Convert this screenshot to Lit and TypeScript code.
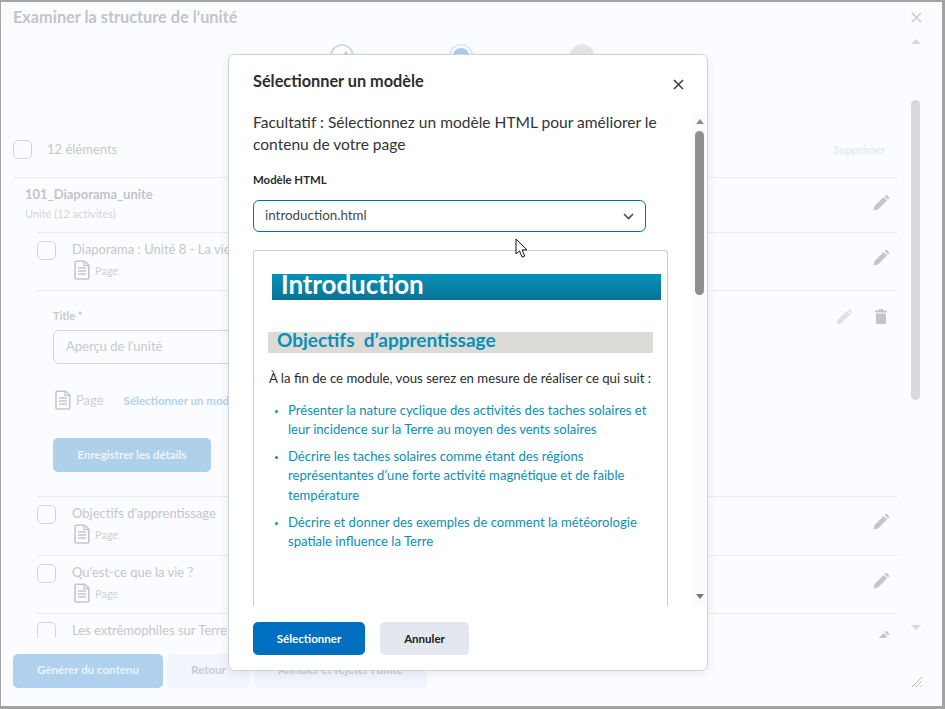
import { LitElement, html, css, svg } from "lit";
import { customElement } from "lit/decorators.js";

const pageIcon = svg`<svg class="pg" viewBox="0 0 16 20" width="16" height="20"><path d="M2 1.2h8.5L14.8 5v13a1 1 0 0 1-1 1H2a1 1 0 0 1-1-1V2.2a1 1 0 0 1 1-1z" fill="none" stroke="#c5c6c9" stroke-width="1.6"/><path d="M10 1.5V5.5h4.5M4 8h8M4 11h8M4 14h8" fill="none" stroke="#c5c6c9" stroke-width="1.3"/></svg>`;
const pencil = (c = "#c4c5c8") => svg`<svg viewBox="0 0 16 16" width="16" height="16"><path d="M0.4 15.6l1.2-4.6L10.7 2l3.4 3.4-9.1 9.1zM11.6 1.1l1-.9c.4-.3 1-.3 1.3 0l2 2c.3.4.3.9 0 1.3l-1 1z" fill="${c}"/></svg>`;

@customElement("app-root")
export class AppRoot extends LitElement {
  static styles = css`
    :host { display: block; width: 945px; height: 709px; overflow: hidden; position: relative; font-family: Lato, "Open Sans", sans-serif; background: #fff; }
    * { box-sizing: border-box; }
    .frame { width: 945px; height: 709px; background: #fbfcff; border: solid #a3a3a3; border-width: 2px 3px 3px 1px; display: flex; flex-direction: column; overflow: hidden; }
    .head { height: 30px; flex: none; padding: 5px 12px 0; display: flex; justify-content: space-between; }
    .head h1 { margin: 0; font-size: 16.3px; line-height: 19px; font-weight: 700; color: #c3c4c7; }
    .x { margin: 5px 8px 0 0; }
    .body { flex: none; height: 606px; display: flex; overflow: hidden; }
    .col { flex: 1; min-width: 0; overflow: hidden; }
    .steps { display: flex; height: 96px; padding: 12px 0 0 329px; gap: 95px; }
    .step { width: 24px; height: 24px; border-radius: 50%; flex: none; }
    .s1 { border: 2px solid #cfe3d3; background: #fff; }
    .s2 { background: #aecdea; border: 4px solid #fbfcff; outline: 1px solid #c5dcf0; outline-offset: -1px; }
    .s3 { background: #e4e6ea; margin-left: 2px; }
    .list { padding: 0 11px 0 12px; }
    .top { display: flex; align-items: center; height: 49px; padding-bottom: 6px; }
    .cb { width: 19px; height: 19px; border: 1px solid #d3d5da; border-radius: 5px; background: #fbfcff; flex: none; }
    .count { margin: -2px 0 0 15px; font-size: 13px; color: #c8c9cc; flex: 1; }
    .del { font-size: 11.2px; font-weight: 700; color: #e0ecf8; margin-right: 13px; }
    .unit { border-top: 1px solid #eaecf1; height: 55px; padding: 0 9px 0 12px; display: flex; justify-content: space-between; align-items: center; }
    .unit b { display: block; font-size: 13px; line-height: 18px; color: #c3c4c7; }
    .unit small { display: block; font-size: 11px; line-height: 22px; color: #d3d4d7; }
    .unit > svg { margin-top: -5px; }
    .subs { margin-left: 24px; }
    .row { border-top: 1px solid #eaecf1; height: 58px; display: flex; padding: 8px 9px 0 0; justify-content: space-between; }
    .row.tall { height: 59px; }
    .row .l { display: flex; gap: 16px; }
    .row .t { font-size: 13px; line-height: 18px; color: #c6c7ca; margin-top: -1px; }
    .meta { display: flex; align-items: center; gap: 5px; font-size: 11px; color: #d0d1d4; margin: 2px 0 0 2px; height: 20px; }
    .row > svg { margin-top: 9px; }
    .edit { border-top: 1px solid #eaecf1; height: 206px; padding: 18px 0 0 16px; display: flex; }
    .form { flex: 1; }
    .lbl { font-size: 11px; font-weight: 700; line-height: 14px; color: #c8c9cc; }
    .inp { margin-top: 7px; width: 420px; height: 34px; border: 1px solid #d5d7dc; border-radius: 6px; padding: 0 12px; font-size: 13px; line-height: 30px; color: #c8c9cc; }
    .pgrow { display: flex; align-items: center; gap: 5px; margin: 26px 0 0 2px; height: 20px; font-size: 13px; color: #cfd0d3; }
    .pgrow a { margin-left: 15px; font-size: 11.5px; font-weight: 700; color: #b3d3ee; }
    .save { margin-top: 28px; width: 158px; height: 34px; padding-bottom: 2px; border-radius: 5px; background: #aed0eb; color: #edf4fb; font-size: 11.5px; font-weight: 700; display: flex; align-items: center; justify-content: center; }
    .tools { display: flex; gap: 23px; padding-right: 11px; }
    .sb { width: 13px; flex: none; margin-right: 20px; display: flex; flex-direction: column; align-items: center; }
    .up { width: 0; height: 0; border: 5.5px solid transparent; border-top: 0; border-bottom: 5px solid #d6d8dc; margin-top: 7px; }
    .thumb { width: 9px; height: 300px; margin-top: 56px; background: #d8d9dd; border-radius: 5px; }
    .dn { width: 0; height: 0; border: 5.5px solid transparent; border-bottom: 0; border-top: 5px solid #d6d8dc; margin-top: auto; margin-bottom: 8px; }
    .foot { flex: none; height: 68px; display: flex; gap: 4px; padding: 16px 12px 0; position: relative; }
    .fb { height: 34px; padding-bottom: 3px; border-radius: 5px; display: flex; align-items: center; justify-content: center; font-size: 11.5px; font-weight: 700; background: #f2f5fb; color: #cbccd0; }
    .fb.p { background: #afd1ed; color: #eaf3fb; width: 150px; }
    .fb.r { width: 83px; }
    .fb.c { width: 173px; }
    .grip { position: absolute; right: 19px; bottom: 18px; }
    .modal { position: absolute; left: 228px; top: 54px; width: 480px; height: 617px; background: #fff; border: 1px solid #cfd3d9; border-radius: 7px; box-shadow: 0 2px 12px rgba(0,0,0,.08); display: flex; flex-direction: column; }
    .mh { flex: none; height: 47px; padding: 16px 23px 0 24px; display: flex; justify-content: space-between; align-items: flex-start; }
    .mh h2 { margin: 0; font-size: 16.3px; line-height: 20px; font-weight: 700; color: #2c2d2f; }
    .mh svg { margin-top: 8px; }
    .mb { flex: 1; min-height: 0; display: flex; }
    .scroll { flex: 1; min-width: 0; padding: 9px 24px 0 24px; overflow: hidden; }
    .intro { margin: 0; font-size: 15.55px; line-height: 22px; color: #333436; }
    .ml { margin-top: 18px; font-size: 11.4px; line-height: 14px; font-weight: 700; color: #2a2b2d; }
    .sel { margin-top: 13px; width: 393px; height: 32px; border: 1px solid #006fbf; border-radius: 6px; padding: 0 11px; display: flex; align-items: center; justify-content: space-between; font-size: 13.4px; color: #47484b; }
    .sel span { margin-top: -3px; }
    .pv { margin-top: 18px; border: 1px solid #cdcdcd; border-bottom: 0; border-radius: 3px 3px 0 0; height: 400px; padding: 23px 6px 0 14px; }
    .pbar { margin-left: 4px; height: 26px; background: linear-gradient(#0592b8, #0a7396); color: #fff; font-size: 26px; font-weight: 700; line-height: 20px; padding-left: 9px; letter-spacing: -.1px; }
    .pobj { margin: 32px 8px 0 0; height: 21px; background: #dcdbd6; color: #0a8fb8; font-size: 19px; font-weight: 700; line-height: 16px; padding-left: 9px; }
    .pt { margin: 16px 0 0 1px; font-size: 13.2px; line-height: 18px; color: #2a2b2d; }
    ul { margin: 13.5px 0 0; padding: 0 0 0 20px; color: #0a8fb8; font-size: 13.1px; line-height: 19.4px; }
    li { margin-bottom: 7.6px; }
    li::marker { font-size: 9px; }
    .msb { width: 15px; flex: none; margin-top: 11px; background: #fbfbfb; display: flex; flex-direction: column; align-items: center; padding-top: 6px; }
    .mup { width: 0; height: 0; border: 4.5px solid transparent; border-top: 0; border-bottom: 5px solid #8f8f8f; }
    .mth { width: 9px; height: 164px; background: #8f8f8f; border-radius: 5px; margin-top: 7px; }
    .mdn { width: 0; height: 0; border: 4.5px solid transparent; border-bottom: 0; border-top: 5px solid #757575; margin-top: auto; margin-bottom: 7px; }
    .mf { flex: none; height: 64px; padding: 16px 24px 0; display: flex; gap: 15px; }
    .btn { height: 33px; border-radius: 5px; font-size: 11.5px; font-weight: 700; display: flex; align-items: center; justify-content: center; }
    .btn.a { width: 112px; background: #006fbf; color: #fff; }
    .btn.b { width: 89px; background: #e3e8f0; color: #202122; }
    .cursor { position: absolute; left: 515px; top: 238px; }
  `;

  row(t: string, cls = "") {
    return html`<div class="row ${cls}"><div class="l"><div class="cb"></div><div><div class="t">${t}</div><div class="meta">${pageIcon}<span>Page</span></div></div></div>${pencil()}</div>`;
  }

  render() {
    return html`
      <div class="frame">
        <div class="head"><h1>Examiner la structure de l'unité</h1>
          <svg class="x" width="11" height="11" viewBox="0 0 11 11"><path d="M1 1l9 9M10 1l-9 9" stroke="#c5c6ca" stroke-width="1.3"/></svg></div>
        <div class="body">
          <div class="col">
            <div class="steps">
              <div class="step s1"><svg width="20" height="20" viewBox="0 0 20 20"><path d="M5 10l3.5 3.5L15 6" fill="none" stroke="#b5d6bd" stroke-width="2.4"/></svg></div>
              <div class="step s2"></div><div class="step s3"></div></div>
            <div class="list">
              <div class="top"><div class="cb"></div><div class="count">12 éléments</div><div class="del">Supprimer</div></div>
              <div class="unit"><div><b>101_Diaporama_unite</b><small>Unité (12 activités)</small></div>${pencil()}</div>
              <div class="subs">
                ${this.row("Diaporama : Unité 8 - La vie")}
                <div class="edit">
                  <div class="form">
                    <div class="lbl">Title *</div>
                    <div class="inp">Aperçu de l'unité</div>
                    <div class="pgrow">${pageIcon}<span>Page</span><a>Sélectionner un modèle</a></div>
                    <div class="save">Enregistrer les détails</div>
                  </div>
                  <div class="tools">${pencil("#e0e1e4")}
                    <svg width="12" height="15" viewBox="0 0 12 15"><path d="M4 0h4l.6 1.5H12v2H0v-2h3.4zM1 4.5h10V14a1 1 0 0 1-1 1H2a1 1 0 0 1-1-1z" fill="#c4c5c8"/></svg></div>
                </div>
                ${this.row("Objectifs d'apprentissage", "tall")}
                ${this.row("Qu'est-ce que la vie ?")}
                ${this.row("Les extrêmophiles sur Terre")}
              </div>
            </div>
          </div>
          <div class="sb"><div class="up"></div><div class="thumb"></div><div class="dn"></div></div>
        </div>
        <div class="foot">
          <div class="fb p">Générer du contenu</div>
          <div class="fb r">Retour</div>
          <div class="fb c">Annuler et rejeter l'unité</div>
          <svg class="grip" width="12" height="12" viewBox="0 0 12 12"><path d="M1 11L11 1M5 11l6-6M9.5 11l1.5-1.5" stroke="#b9babe" stroke-width="1"/></svg>
        </div>
      </div>
      <div class="modal">
        <div class="mh"><h2>Sélectionner un modèle</h2>
          <svg width="11" height="11" viewBox="0 0 11 11"><path d="M1 1l9 9M10 1l-9 9" stroke="#404145" stroke-width="1.6"/></svg></div>
        <div class="mb">
          <div class="scroll">
            <p class="intro">Facultatif : Sélectionnez un modèle HTML pour améliorer le contenu de votre page</p>
            <div class="ml">Modèle HTML</div>
            <div class="sel"><span>introduction.html</span>
              <svg width="11" height="7" viewBox="0 0 11 7"><path d="M1 1l4.5 4.5L10 1" fill="none" stroke="#4a4b4e" stroke-width="1.6"/></svg></div>
            <div class="pv">
              <div class="pbar">Introduction</div>
              <div class="pobj">Objectifs&nbsp; d’apprentissage</div>
              <div class="pt">À la fin de ce module, vous serez en mesure de réaliser ce qui suit :</div>
              <ul>
                <li>Présenter la nature cyclique des activités des taches solaires et leur incidence sur la Terre au moyen des vents solaires</li>
                <li>Décrire les taches solaires comme étant des régions représentantes d’une forte activité magnétique et de faible température</li>
                <li>Décrire et donner des exemples de comment la météorologie spatiale influence la Terre</li>
              </ul>
            </div>
          </div>
          <div class="msb"><div class="mup"></div><div class="mth"></div><div class="mdn"></div></div>
        </div>
        <div class="mf"><div class="btn a">Sélectionner</div><div class="btn b">Annuler</div></div>
      </div>
      <svg class="cursor" width="14" height="21" viewBox="0 0 14 21"><path d="M1 1v15l3.5-3.2 2.6 6.4 2.6-1.1-2.6-6.2H12z" fill="#fff" stroke="#111" stroke-width="1"/></svg>
    `;
  }
}
